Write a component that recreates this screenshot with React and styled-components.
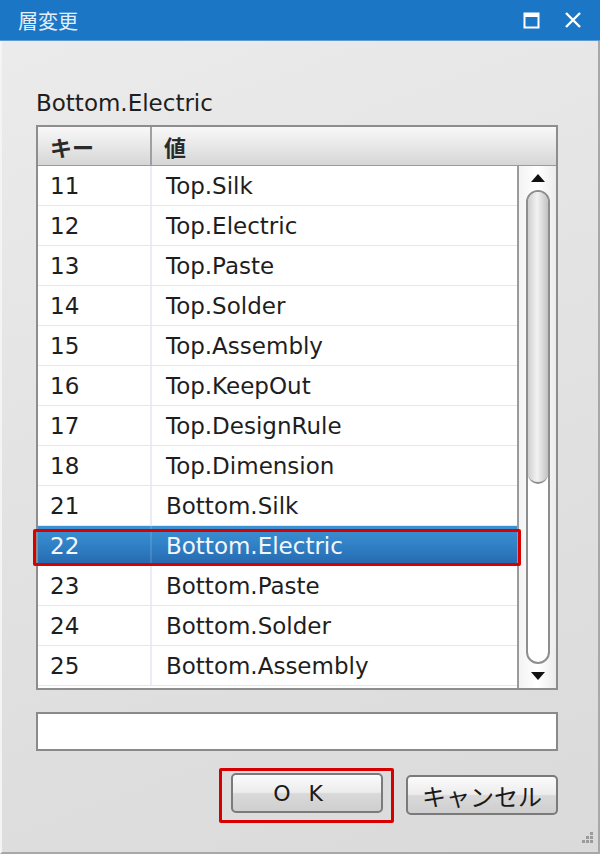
import React from 'react';
import styled, { createGlobalStyle } from 'styled-components';

const GlobalStyle = createGlobalStyle`
  html, body {
    margin: 0;
    padding: 0;
    background: #dcdcdc;
  }
  body {
    font-family: "DejaVu Sans", "Noto Sans CJK JP", sans-serif;
  }
`;

const Window = styled.div`
  width: 600px;
  height: 854px;
  box-sizing: border-box;
  display: flex;
  flex-direction: column;
  border-left: 2px solid #f4f4f4;
  border-right: 2px solid #a8a8a8;
  border-bottom: 2px solid #a8a8a8;
  background: linear-gradient(160deg, #ececec 0%, #e2e2e2 50%, #dadada 100%);
  position: relative;
`;

const TitleBar = styled.div`
  height: 40px;
  margin: 0 -2px;
  background: #1b76c6;
  border-bottom: 1px solid #5d9bd4;
  display: flex;
  align-items: center;
  padding: 0 12px 0 18px;
  color: #fff;
`;

const Title = styled.div`
  flex: 1;
  font-family: "Noto Sans CJK JP", sans-serif;
  font-size: 20px;
  color: #e3eef9;
`;

const TitleButton = styled.div`
  width: 30px;
  height: 30px;
  margin-left: 12px;
  display: flex;
  align-items: center;
  justify-content: center;
`;

const Body = styled.div`
  flex: 1;
  display: flex;
  flex-direction: column;
  padding: 48px 40px 0 34px;
`;

const Caption = styled.div`
  font-size: 23px;
  line-height: 28px;
  color: #1e1e1e;
  margin-bottom: 8px;
`;

const TableFrame = styled.div`
  height: 565px;
  box-sizing: border-box;
  border: 2px solid #8d8d8d;
  background: #fff;
  display: flex;
  flex-direction: column;
`;

const HeaderRow = styled.div`
  height: 38px;
  display: grid;
  grid-template-columns: 114px 1fr;
  background: linear-gradient(#f8f8f8, #e6e6e6 55%, #d6d6d6);
  border-bottom: 1px solid #9a9a9a;
`;

const HeaderCell = styled.div`
  display: flex;
  align-items: center;
  padding-left: 12px;
  font-family: "Noto Sans CJK JP", sans-serif;
  font-size: 22px;
  font-weight: 700;
  color: #2a2a2a;
  border-right: ${(p) => (p.divider ? '2px solid #a0a0a0' : 'none')};
`;

const ListArea = styled.div`
  flex: 1;
  display: flex;
  min-height: 0;
`;

const List = styled.div`
  flex: 1;
  display: flex;
  flex-direction: column;
`;

const Row = styled.div`
  height: 40px;
  box-sizing: border-box;
  display: grid;
  grid-template-columns: 114px 1fr;
  border-bottom: 1px solid #e7e7e7;
  position: relative;
  color: ${(p) => (p.selected ? '#f2f7fc' : '#1e1e1e')};
  background: ${(p) =>
    p.selected ? 'linear-gradient(#3d92d3, #2f7ec4 55%, #2668ae)' : 'transparent'};

  ${(p) =>
    p.selected &&
    `
    &::after {
      content: '';
      position: absolute;
      left: -5px;
      right: -4px;
      top: 3px;
      bottom: -1px;
      border: 3px solid #d90000;
      border-radius: 2px;
      pointer-events: none;
    }
  `}
`;

const Cell = styled.div`
  display: flex;
  align-items: center;
  padding-left: ${(p) => (p.first ? '12px' : '14px')};
  font-size: 23px;
  border-right: ${(p) =>
    p.first ? (p.selected ? '2px solid rgba(255,255,255,0.12)' : '2px solid #ececf6') : 'none'};
`;

const ScrollBar = styled.div`
  width: 37px;
  border-left: 2px solid #9b9b9b;
  background: linear-gradient(90deg, #f3f3f3, #ffffff 50%, #ececec);
  display: flex;
  flex-direction: column;
  align-items: center;
`;

const Arrow = styled.div`
  height: 24px;
  display: flex;
  align-items: center;
  justify-content: center;
`;

const Track = styled.div`
  flex: 1;
  width: 24px;
  box-sizing: border-box;
  border: 2px solid #8e8e8e;
  border-radius: 12px;
  background: #fff;
  overflow: hidden;
`;

const Thumb = styled.div`
  height: 290px;
  background: linear-gradient(90deg, #cfcfcf, #f2f2f2 45%, #e6e6e6 60%, #c2c2c2);
  border-bottom: 2px solid #8e8e8e;
  border-radius: 0 0 10px 10px;
`;

const InputBox = styled.div`
  margin-top: 22px;
  height: 39px;
  box-sizing: border-box;
  border: 2px solid #8a8a8a;
  background: #fff;
`;

const ButtonRow = styled.div`
  display: flex;
  justify-content: flex-end;
  align-items: flex-start;
  margin-top: 17px;
  gap: 12px;
`;

const Highlight = styled.div`
  border: 3px solid #d70000;
  border-radius: 2px;
  padding: 2px 8px 7px 9px;
`;

const Button = styled.div`
  width: 152px;
  height: 40px;
  box-sizing: border-box;
  border: 2px solid #7a7a7a;
  border-radius: 5px;
  background: linear-gradient(#fbfbfb, #ececec 48%, #d9d9d9 52%, #cfcfcf);
  display: flex;
  align-items: center;
  justify-content: center;
  font-family: ${(p) => (p.latin ? '"DejaVu Sans"' : '"Noto Sans CJK JP"')}, sans-serif;
  font-size: ${(p) => (p.latin ? '22px' : '24px')};
  color: #1a1a1a;
  letter-spacing: ${(p) => (p.latin ? '18px' : '0')};
  margin-top: ${(p) => (p.offset ? '7px' : '0')};
`;

const Grip = styled.div`
  position: absolute;
  right: 4px;
  bottom: 4px;
`;

const rows = [
  ['11', 'Top.Silk'],
  ['12', 'Top.Electric'],
  ['13', 'Top.Paste'],
  ['14', 'Top.Solder'],
  ['15', 'Top.Assembly'],
  ['16', 'Top.KeepOut'],
  ['17', 'Top.DesignRule'],
  ['18', 'Top.Dimension'],
  ['21', 'Bottom.Silk'],
  ['22', 'Bottom.Electric'],
  ['23', 'Bottom.Paste'],
  ['24', 'Bottom.Solder'],
  ['25', 'Bottom.Assembly'],
];

const App = () => (
  <>
    <GlobalStyle />
    <Window>
      <TitleBar>
        <Title>層変更</Title>
        <TitleButton>
          <svg width="17" height="17" viewBox="0 0 17 17">
            <rect x="1.5" y="1.5" width="14" height="14" fill="none" stroke="#fff" strokeWidth="2" />
            <rect x="1.5" y="1.5" width="14" height="3.5" fill="#fff" />
          </svg>
        </TitleButton>
        <TitleButton>
          <svg width="18" height="18" viewBox="0 0 18 18">
            <path d="M2 2 L16 16 M16 2 L2 16" stroke="#fff" strokeWidth="2.4" />
          </svg>
        </TitleButton>
      </TitleBar>
      <Body>
        <Caption>Bottom.Electric</Caption>
        <TableFrame>
          <HeaderRow>
            <HeaderCell divider>キー</HeaderCell>
            <HeaderCell>値</HeaderCell>
          </HeaderRow>
          <ListArea>
            <List>
              {rows.map(([key, value]) => {
                const selected = key === '22';
                return (
                  <Row key={key} selected={selected}>
                    <Cell first selected={selected}>{key}</Cell>
                    <Cell>{value}</Cell>
                  </Row>
                );
              })}
            </List>
            <ScrollBar>
              <Arrow>
                <svg width="14" height="8" viewBox="0 0 14 8">
                  <path d="M0 8 L7 0 L14 8 Z" fill="#111" />
                </svg>
              </Arrow>
              <Track>
                <Thumb />
              </Track>
              <Arrow>
                <svg width="14" height="8" viewBox="0 0 14 8">
                  <path d="M0 0 L14 0 L7 8 Z" fill="#111" />
                </svg>
              </Arrow>
            </ScrollBar>
          </ListArea>
        </TableFrame>
        <InputBox />
        <ButtonRow>
          <Highlight>
            <Button latin>OK</Button>
          </Highlight>
          <Button offset>キャンセル</Button>
        </ButtonRow>
      </Body>
      <Grip>
        <svg width="14" height="14" viewBox="0 0 14 14" fill="#9a9a9a">
          <rect x="10" y="2" width="3" height="3" />
          <rect x="6" y="6" width="3" height="3" />
          <rect x="10" y="6" width="3" height="3" />
          <rect x="2" y="10" width="3" height="3" />
          <rect x="6" y="10" width="3" height="3" />
          <rect x="10" y="10" width="3" height="3" />
        </svg>
      </Grip>
    </Window>
  </>
);

export default App;
